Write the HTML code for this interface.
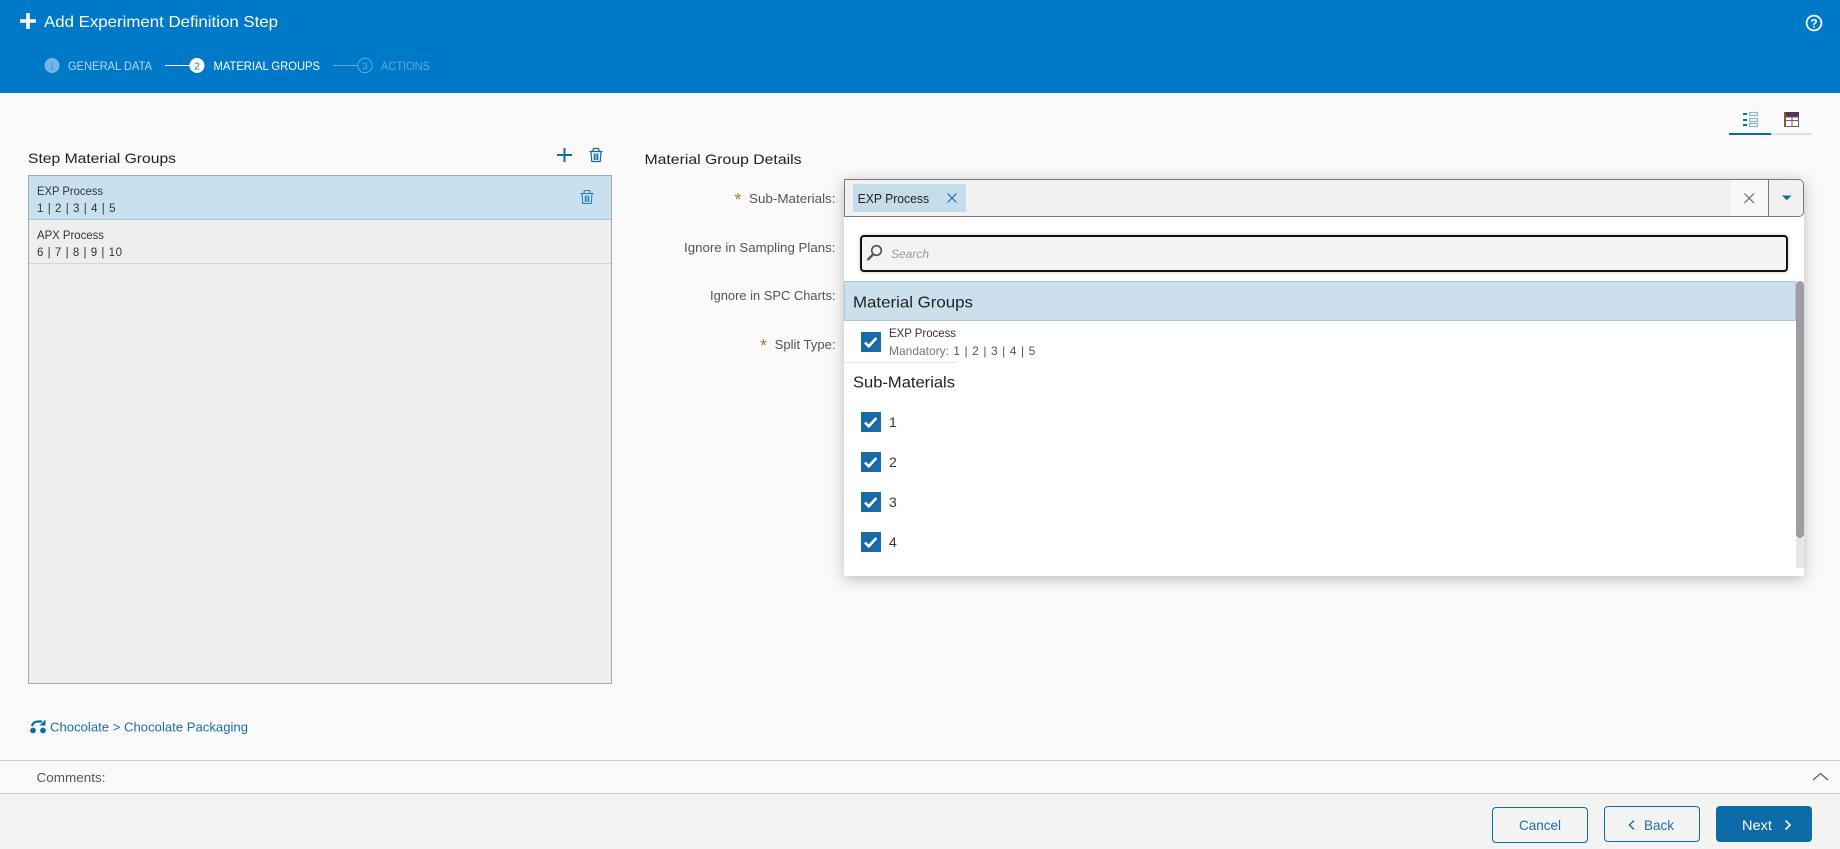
<!DOCTYPE html>
<html lang="en"><head><meta charset="utf-8"><title>Add Experiment Definition Step</title>
<style>
html,body{margin:0;padding:0;width:1840px;height:849px;overflow:hidden;background:#fafafa;font-family:"Liberation Sans",sans-serif}
.b{position:absolute;box-sizing:border-box}
svg{position:absolute;left:0;top:0}
text{font-family:"Liberation Sans",sans-serif;white-space:pre}
</style></head><body>
<div class="b" style="left:0;top:0;width:1840px;height:93px;background:#0079c9"></div>
<!-- view tabs -->
<div class="b" style="left:1729px;top:133px;width:42px;height:2px;background:#0d6ca7"></div>
<div class="b" style="left:1771px;top:133px;width:41px;height:2px;background:#e0e0e0"></div>
<!-- list -->
<div class="b" style="left:28px;top:175px;width:584px;height:509px;background:#eeeeee;border:1px solid #a9a9a9"></div>
<div class="b" style="left:29px;top:176px;width:582px;height:44px;background:#c9e0ef;border-bottom:1px solid #a5c4da"></div>
<div class="b" style="left:29px;top:220px;width:582px;height:44px;border-bottom:1px solid #d6d6d6"></div>
<!-- dropdown -->
<div class="b" style="left:844px;top:179px;width:960px;height:397px;background:#fff;box-shadow:0 3px 14px rgba(0,0,0,.26)"></div>
<div class="b" style="left:844px;top:179px;width:960px;height:38px;background:#f1f1f1;border:1px solid #7a7a7a;border-radius:1px 5px 5px 1px"></div>
<div class="b" style="left:1731px;top:180px;width:37px;height:36px;background:#f8f8f8"></div>
<div class="b" style="left:1768px;top:179px;width:1px;height:38px;background:#7a7a7a"></div>
<div class="b" style="left:853px;top:184px;width:113px;height:28px;background:#c5dcea"></div>
<div class="b" style="left:860px;top:235px;width:928px;height:37px;background:#f3f3f1;border:2px solid #111;border-radius:4px;box-shadow:0 0 4px rgba(0,0,0,.2)"></div>
<div class="b" style="left:844px;top:281px;width:952px;height:40px;background:#cbe0ec;border:1px solid #a9c6de"></div>
<div class="b" style="left:844px;top:362px;width:112px;height:1px;background:#e6e6e6"></div>
<div class="b" style="left:1796px;top:538px;width:8px;height:30px;background:#e6e6e6"></div>
<div class="b" style="left:1796px;top:281px;width:8px;height:257px;background:#9d9da3;border-radius:4px"></div>
<!-- checkboxes -->
<div class="b" style="left:861px;top:332px;width:20px;height:20px;background:#176ba6"></div>
<div class="b" style="left:861px;top:412px;width:20px;height:20px;background:#176ba6"></div>
<div class="b" style="left:861px;top:452px;width:20px;height:20px;background:#176ba6"></div>
<div class="b" style="left:861px;top:492px;width:20px;height:20px;background:#176ba6"></div>
<div class="b" style="left:861px;top:532px;width:20px;height:20px;background:#176ba6"></div>
<!-- bottom bars -->
<div class="b" style="left:0;top:760px;width:1840px;height:34px;border-top:1px solid #cccccc;border-bottom:1px solid #cccccc"></div>
<div class="b" style="left:0;top:794px;width:1840px;height:55px;background:#f3f4f2"></div>
<div class="b" style="left:1492px;top:807px;width:96px;height:36px;border:1px solid #0d6ca7;border-radius:4px"></div>
<div class="b" style="left:1604px;top:806px;width:96px;height:36px;border:1px solid #0d6ca7;border-radius:4px"></div>
<div class="b" style="left:1716px;top:806px;width:96px;height:36px;background:#0d6ca7;border-radius:4px"></div>

<svg width="1840" height="849" viewBox="0 0 1840 849" xmlns="http://www.w3.org/2000/svg">
<!-- header -->
<path d="M28 13v16M20 21h16" stroke="#fff" stroke-width="3.6" fill="none"/>
<text x="44" y="27" font-size="16" fill="#fff" textLength="234" lengthAdjust="spacingAndGlyphs">Add Experiment Definition Step</text>
<circle cx="1814" cy="23" r="7.4" fill="none" stroke="#fff" stroke-width="1.8"/>
<text x="1814" y="27.5" font-size="12" font-weight="bold" fill="#fff" text-anchor="middle">?</text>
<circle cx="52" cy="65.500" r="7.500" fill="#74b7e6"/>
<text x="52" y="69.500" font-size="10" fill="#3e95d5" text-anchor="middle">1</text>
<text x="68" y="70" font-size="12" fill="#b3d9f2" textLength="84" lengthAdjust="spacingAndGlyphs">GENERAL DATA</text>
<path d="M165 65.500h25" stroke="#fff" stroke-width="1"/>
<circle cx="197" cy="65.500" r="7.500" fill="#fff"/>
<text x="197" y="69.500" font-size="10" fill="#0079c9" text-anchor="middle">2</text>
<text x="213.500" y="70" font-size="12" fill="#fff" textLength="106.500" lengthAdjust="spacingAndGlyphs">MATERIAL GROUPS</text>
<path d="M333 65.500h24" stroke="#5aa9de" stroke-width="1"/>
<circle cx="365" cy="65.500" r="7.200" fill="none" stroke="#5aa9de" stroke-width="1"/>
<text x="365" y="69.500" font-size="10" fill="#5aa9de" text-anchor="middle">3</text>
<text x="381" y="70" font-size="12" fill="#5aa9de" textLength="49" lengthAdjust="spacingAndGlyphs">ACTIONS</text>
<!-- view tab icons -->
<g fill="none" stroke="#8fb3cc" stroke-width="1.2">
<rect x="1749.5" y="112.5" width="8" height="3"/><rect x="1749.5" y="118.5" width="8" height="3"/><rect x="1749.5" y="123.5" width="8" height="3"/></g>
<path d="M1743 114h4M1743 120h4M1743 125h4" stroke="#0d6ca7" stroke-width="2"/>
<rect x="1784" y="112" width="15" height="15" fill="#fff"/>
<rect x="1784" y="112" width="15" height="5" fill="#553355"/>
<rect x="1784" y="112" width="2" height="15" fill="#8a5a2a"/>
<path d="M1786 120.5h13M1786 126.5h13M1792 117v10M1798.5 117v10M1786 117h13" stroke="#6e5a7a" stroke-width="1" fill="none"/>
<!-- left panel -->
<text x="28" y="163" font-size="14" fill="#222" textLength="148" lengthAdjust="spacingAndGlyphs">Step Material Groups</text>
<path d="M564.500 148v14M557 155h15" stroke="#0d6ca7" stroke-width="2" fill="none"/>
<g fill="none" stroke="#0d6ca7" stroke-width="1.200">
<path d="M589.500 151.500h13M593 151.500v-1.500q0-1.500 1.500-1.500h3q1.500 0 1.500 1.500v1.500"/>
<path d="M591 152l.8 9.500h8.400l.8-9.500M594.300 153.500v6.500M596 153.500v6.500M597.700 153.500v6.500"/></g>
<g fill="none" stroke="#2a7cb5" stroke-width="1.100">
<path d="M580.500 193.500h13M584 193.500v-1.500q0-1.500 1.500-1.500h3q1.500 0 1.500 1.500v1.500"/>
<path d="M582 194l.8 9.500h8.400l.8-9.500M585.300 195.500v6.500M587 195.500v6.500M588.700 195.500v6.500"/></g>
<text x="37" y="195" font-size="12" fill="#333" textLength="66" lengthAdjust="spacingAndGlyphs">EXP Process</text>
<text x="37" y="212" font-size="11.500" fill="#333" textLength="78.500">1 | 2 | 3 | 4 | 5</text>
<text x="37" y="239" font-size="12" fill="#333" textLength="67" lengthAdjust="spacingAndGlyphs">APX Process</text>
<text x="37" y="256" font-size="11.500" fill="#333" textLength="85">6 | 7 | 8 | 9 | 10</text>
<!-- breadcrumb -->
<circle cx="33" cy="730.500" r="2.900" fill="#0d6ca7"/><circle cx="43" cy="730.500" r="2.900" fill="#0d6ca7"/>
<path d="M32 726q1-4.500 6-4.500h4" stroke="#0d6ca7" stroke-width="2.200" fill="none"/>
<path d="M45.500 719.500v6h-6z" fill="#0d6ca7"/>
<text x="50" y="731.500" font-size="13" fill="#1d6ea6" textLength="198" lengthAdjust="spacingAndGlyphs">Chocolate &gt; Chocolate Packaging</text>
<text x="36.500" y="782" font-size="13" fill="#555" textLength="69" lengthAdjust="spacingAndGlyphs">Comments:</text>
<!-- form -->
<text x="644.500" y="164" font-size="14" fill="#222" textLength="157" lengthAdjust="spacingAndGlyphs">Material Group Details</text>
<text x="734.500" y="206" font-size="18" fill="#a8753a">*</text>
<text x="749" y="203" font-size="13" fill="#555" textLength="86.500" lengthAdjust="spacingAndGlyphs">Sub-Materials:</text>
<text x="684" y="252" font-size="13" fill="#555" textLength="151.500" lengthAdjust="spacingAndGlyphs">Ignore in Sampling Plans:</text>
<text x="710" y="300" font-size="13" fill="#555" textLength="125.500" lengthAdjust="spacingAndGlyphs">Ignore in SPC Charts:</text>
<text x="760" y="352" font-size="18" fill="#a8753a">*</text>
<text x="774.600" y="349" font-size="13" fill="#555" textLength="61" lengthAdjust="spacingAndGlyphs">Split Type:</text>
<text x="857.600" y="203" font-size="13" fill="#222" textLength="71.500" lengthAdjust="spacingAndGlyphs">EXP Process</text>
<path d="M947.500 193.500l9 9M956.500 193.500l-9 9" stroke="#0d6ca7" stroke-width="1" fill="none"/>
<path d="M1744.500 193.500l9.500 9.500M1754 193.500l-9.500 9.500" stroke="#666" stroke-width="1.200" fill="none"/>
<path d="M1782 195.500h9.500l-4.750 4.800z" fill="#0d6ca7"/>
<!-- search -->
<circle cx="876.500" cy="250.500" r="4.800" fill="none" stroke="#555" stroke-width="1.700"/>
<path d="M873 254.500l-5.500 5.500" stroke="#555" stroke-width="2.400"/>
<text x="891" y="258" font-size="12" font-style="italic" fill="#9a9a9a" textLength="38" lengthAdjust="spacingAndGlyphs">Search</text>
<text x="853" y="307.500" font-size="16" fill="#222" textLength="120" lengthAdjust="spacingAndGlyphs">Material Groups</text>
<text x="889" y="337" font-size="12" fill="#333" textLength="67" lengthAdjust="spacingAndGlyphs">EXP Process</text>
<text x="889" y="355" font-size="12" fill="#777" textLength="60" lengthAdjust="spacingAndGlyphs">Mandatory:</text>
<text x="953.300" y="355" font-size="12" fill="#555" textLength="82">1 | 2 | 3 | 4 | 5</text>
<text x="853" y="387.500" font-size="16" fill="#222" textLength="102" lengthAdjust="spacingAndGlyphs">Sub-Materials</text>
<g fill="none" stroke="#fff" stroke-width="2.600">
<path d="M865 342.500l3.800 3.800 7.600-8.300"/><path d="M865 422.500l3.800 3.800 7.600-8.300"/><path d="M865 462.500l3.800 3.800 7.600-8.300"/><path d="M865 502.500l3.800 3.800 7.600-8.300"/><path d="M865 542.500l3.800 3.800 7.600-8.300"/></g>
<text x="889" y="427" font-size="14" fill="#333">1</text>
<text x="889" y="467" font-size="14" fill="#333">2</text>
<text x="889" y="507" font-size="14" fill="#333">3</text>
<text x="889" y="547" font-size="14" fill="#333">4</text>
<!-- footer -->
<path d="M1813 780l7.500-6.500 7.500 6.500" stroke="#555" stroke-width="1.200" fill="none"/>
<text x="1519" y="830" font-size="14" fill="#1d6ea6" textLength="42" lengthAdjust="spacingAndGlyphs">Cancel</text>
<path d="M1634 820.500l-4.500 4.500 4.500 4.500" stroke="#0d6ca7" stroke-width="1.400" fill="none"/>
<text x="1644" y="830" font-size="14" fill="#1d6ea6" textLength="30" lengthAdjust="spacingAndGlyphs">Back</text>
<text x="1742" y="830" font-size="14" fill="#fff" textLength="30" lengthAdjust="spacingAndGlyphs">Next</text>
<path d="M1785.500 820.500l4.500 4.500-4.500 4.500" stroke="#fff" stroke-width="1.600" fill="none"/>
</svg>
</body></html>
